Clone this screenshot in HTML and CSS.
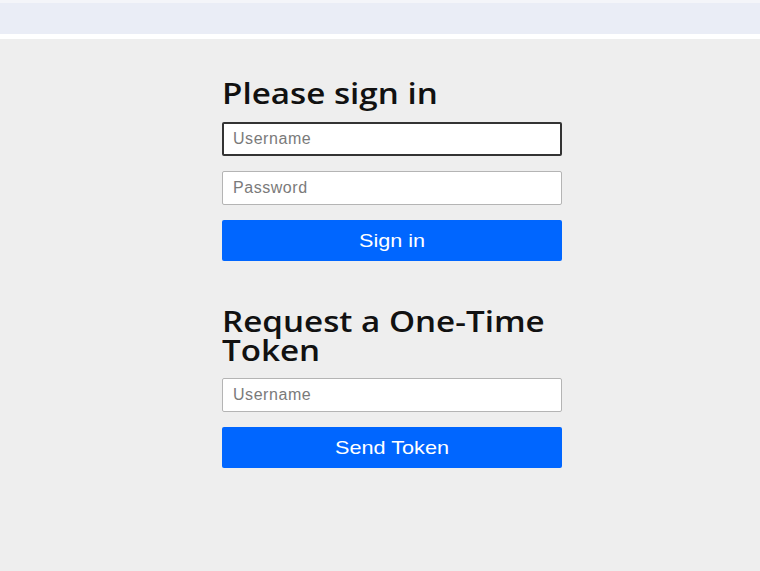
FILE: index.html
```html
<!DOCTYPE html>
<html>
<head>
<meta charset="utf-8">
<link rel="stylesheet" href="styles.css">
</head>
<body>
<div class="topbar"></div>
<div class="gap"></div>
<main class="main">
  <div class="panel">
    <h2 class="title"><span class="stretch">Please sign in</span></h2>
    <input class="field focused" type="text" placeholder="Username" autofocus>
    <input class="field" type="password" placeholder="Password">
    <button class="btn"><span class="btn-label">Sign in</span></button>
    <h2 class="title second"><span class="stretch">Request a One-Time Token</span></h2>
    <input class="field" type="text" placeholder="Username">
    <button class="btn"><span class="btn-label">Send Token</span></button>
  </div>
</main>
</body>
</html>
```
FILE: styles.css
```css
html, body {
  margin: 0;
  padding: 0;
  height: 100%;
}
body {
  background: #eeeeee;
  font-family: "Liberation Sans", Arial, sans-serif;
}
.topbar {
  height: 31px;
  border-top: 3px solid #f4f5f9;
  background: #eaedf6;
}
.gap {
  height: 5px;
  background: #ffffff;
}
.main {
  padding-left: 222px;
}
.panel {
  width: 340px;
  display: flex;
  flex-direction: column;
}
.title {
  font-family: "Open Sans", sans-serif;
  font-weight: 600;
  font-size: 28px;
  line-height: 29px;
  color: #111111;
  margin: 40px 0 14px 0;
}
.title.second {
  margin-top: 46px;
  margin-bottom: 13px;
}
.stretch {
  display: inline-block;
  width: 287px;
  transform: scaleX(1.185);
  transform-origin: left center;
}
.field {
  box-sizing: border-box;
  height: 34px;
  width: 340px;
  margin: 0 0 15px 0;
  padding: 0 10px 0 10px;
  border: 1px solid #b4b4b4;
  border-radius: 2px;
  background: #ffffff;
  font-family: "Liberation Sans", Arial, sans-serif;
  font-size: 16px;
  letter-spacing: 0.55px;
  color: #333;
  outline: none;
}
.field::placeholder {
  color: #7a7a7a;
}
.field.focused {
  border: 2px solid #333333;
  padding-left: 9px;
}
.btn {
  box-sizing: border-box;
  height: 41px;
  width: 340px;
  margin: 0;
  border: none;
  border-radius: 2px;
  background: #0066ff;
  color: #ffffff;
  font-family: "Liberation Sans", Arial, sans-serif;
  font-size: 19px;
  padding: 0;
}
.btn-label {
  display: inline-block;
  transform: scaleX(1.14);
}
```
